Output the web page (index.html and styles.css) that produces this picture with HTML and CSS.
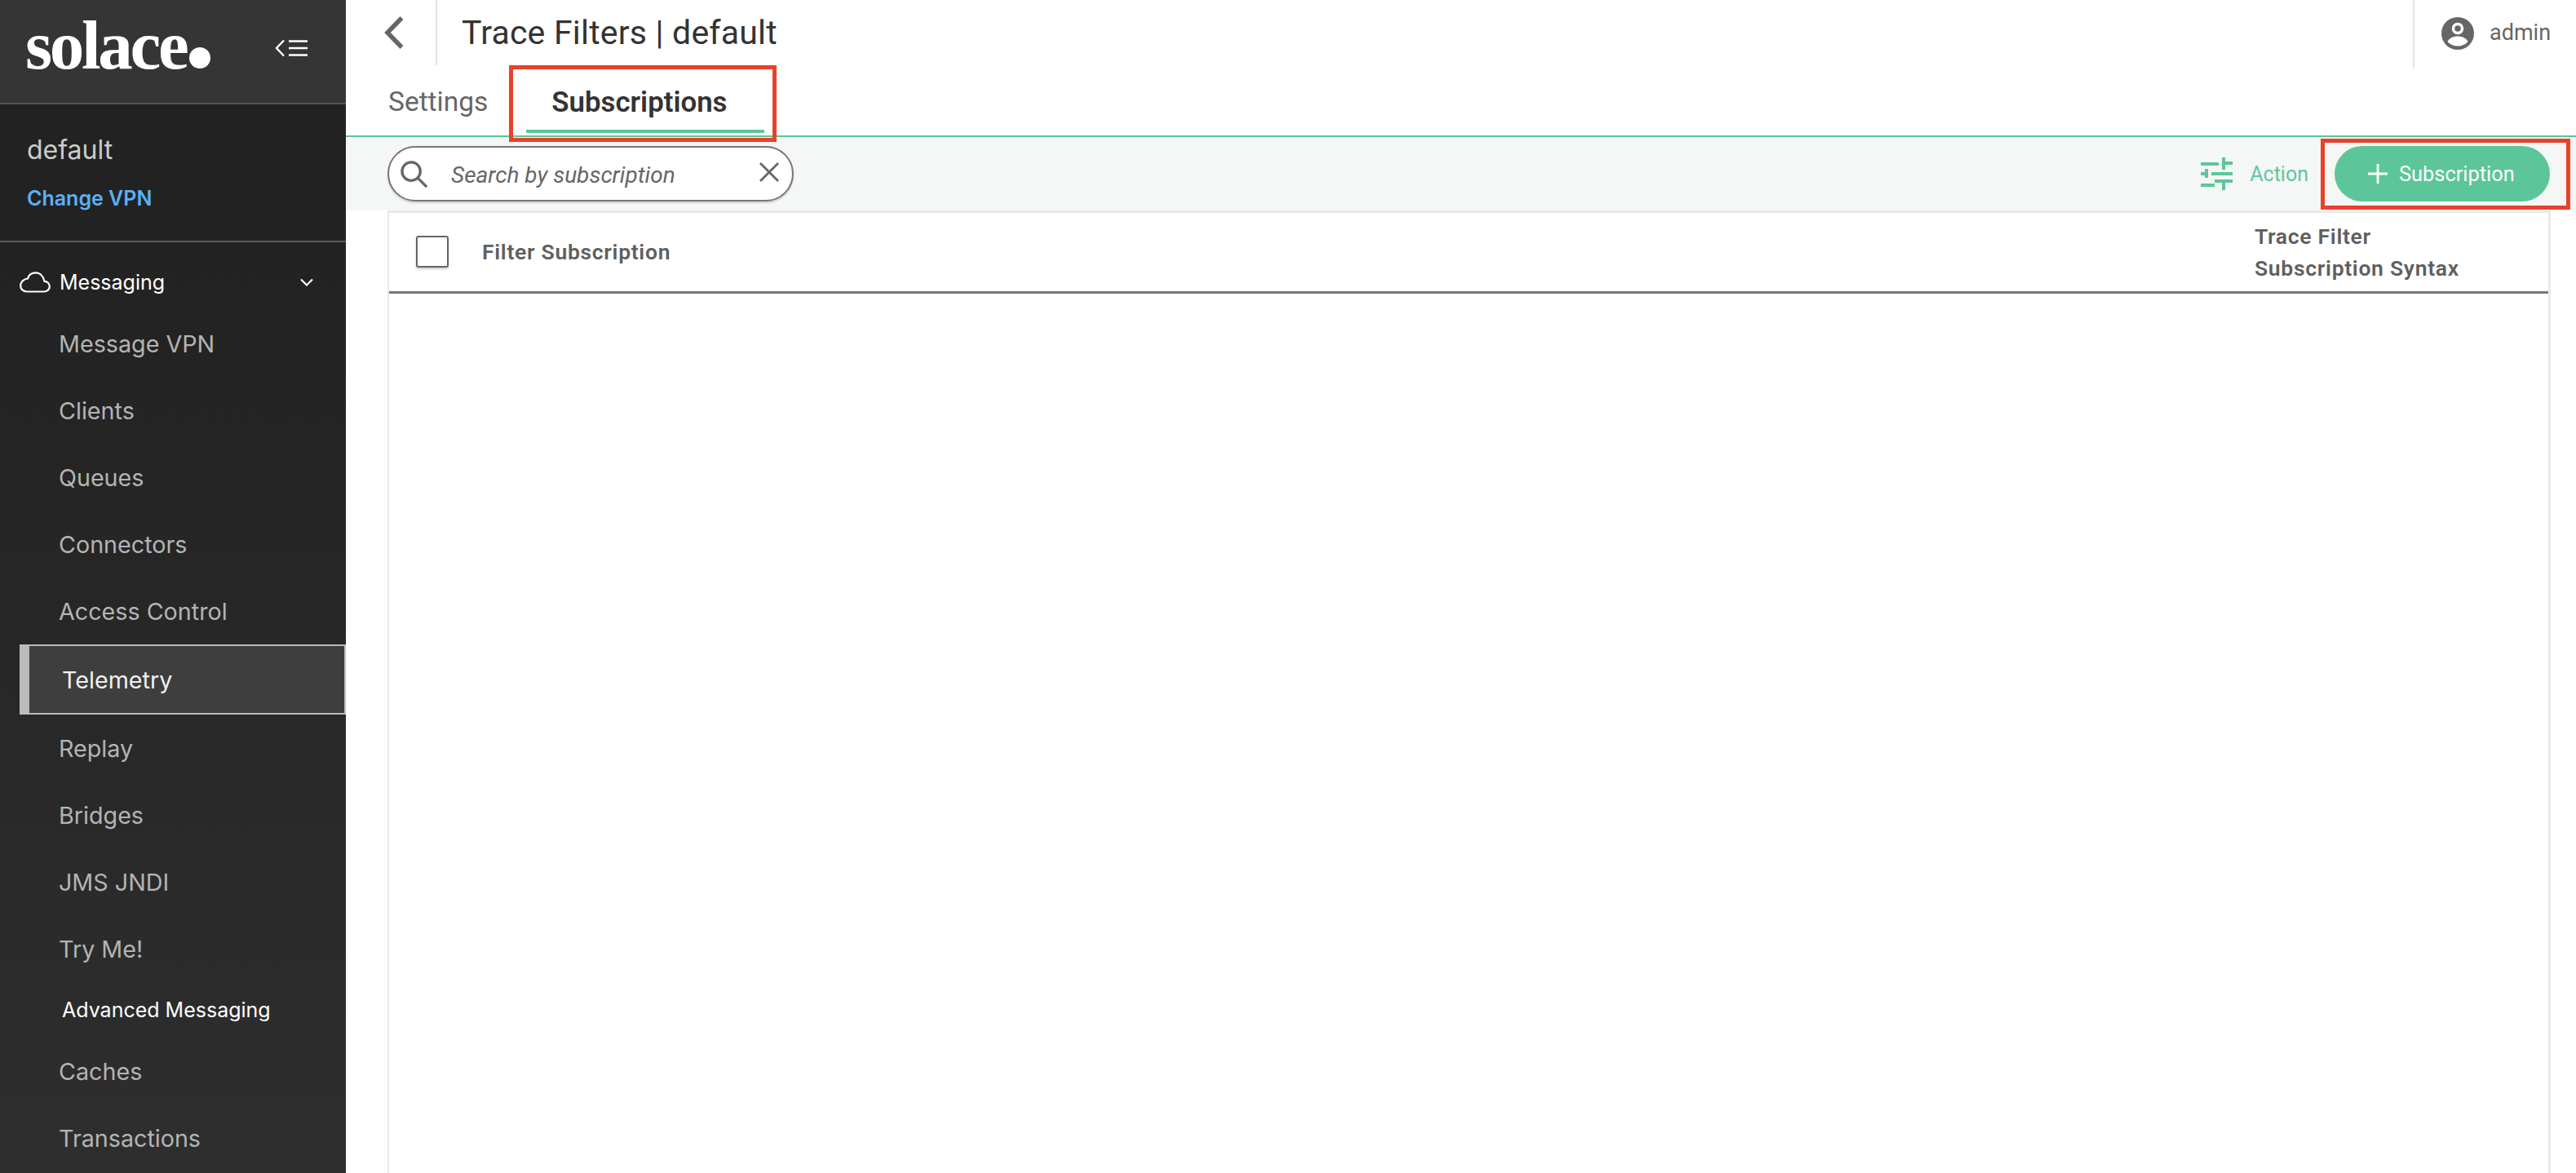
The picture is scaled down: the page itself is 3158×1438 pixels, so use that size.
FILE: index.html
```html
<!DOCTYPE html>
<html lang="en">
<head>
<meta charset="utf-8">
<title>Trace Filters | default</title>
<link rel="stylesheet" href="styles.css">
</head>
<body>
<div class="app">
  <aside class="sidebar">
    <div class="brand">
      <span class="logo">solace<span class="logo-dot"></span></span>
      <svg class="collapse" viewBox="0 0 40 22" fill="none" stroke="#fff" stroke-width="2.4"><path d="M11 1.5 2 11l9 9.500"/><path d="M17 2.500h23M17 11h23M17 19.500h23"/></svg>
    </div>
    <div class="vpn">
      <div class="vpn-name">default</div>
      <a class="vpn-change">Change VPN</a>
    </div>
    <nav class="nav">
      <div class="nav-group">
        <svg class="cloud" viewBox="0 0 38 26" fill="none" stroke="#fff" stroke-width="2.200"><path d="M9 24.500h21c4 0 6.800-2.800 6.800-6.300 0-3.400-2.700-6.200-6.300-6.300C29.200 5.500 25 1.300 19.500 1.300c-4.800 0-8.300 3-9.500 7.200C5 9 1.200 12.700 1.200 17.200c0 4.200 3.300 7.300 7.800 7.300Z"/></svg>
        <span class="nav-group-label">Messaging</span>
        <svg class="caret" viewBox="0 0 16 10" fill="none" stroke="#fff" stroke-width="2.200"><path d="m1 1.500 7 7 7-7"/></svg>
      </div>
      <a class="nav-item">Message VPN</a>
      <a class="nav-item">Clients</a>
      <a class="nav-item">Queues</a>
      <a class="nav-item">Connectors</a>
      <a class="nav-item">Access Control</a>
      <a class="nav-item nav-active">Telemetry</a>
      <a class="nav-item">Replay</a>
      <a class="nav-item">Bridges</a>
      <a class="nav-item">JMS JNDI</a>
      <a class="nav-item">Try Me!</a>
      <div class="nav-section">Advanced Messaging</div>
      <a class="nav-item">Caches</a>
      <a class="nav-item">Transactions</a>
    </nav>
  </aside>
  <main class="main">
    <header class="topbar">
      <div class="back">
        <svg class="back-icon" viewBox="0 0 24 40" fill="none" stroke="#666" stroke-width="5.500"><path d="M21.500 2 4 20l17.500 18"/></svg>
      </div>
      <h1 class="title">Trace Filters | default</h1>
      <div class="user">
        <svg class="avatar" viewBox="0 0 40 40"><circle cx="20" cy="20" r="20" fill="#666"/><circle cx="20" cy="14" r="5.500" fill="none" stroke="#fff" stroke-width="3.500"/><path d="M7.500 30c2-4.500 7.500-6.500 12.500-6.500S30.500 25.500 32.500 30c-3 3.600-7.500 5.500-12.500 5.500S10.500 33.600 7.500 30Z" fill="#fff"/></svg>
        <span class="user-name">admin</span>
      </div>
    </header>
    <div class="tabs">
      <a class="tab">Settings</a>
      <a class="tab tab-active">Subscriptions</a>
    </div>
    <div class="toolbar">
      <div class="search">
        <svg class="search-icon" viewBox="0 0 36 36" fill="none" stroke="#666" stroke-width="3.400"><circle cx="14.500" cy="14.500" r="11.500"/><path d="m23 23 11 11"/></svg>
        <span class="search-text">Search by subscription</span>
        <svg class="search-clear" viewBox="0 0 24 24" fill="none" stroke="#666" stroke-width="2.800"><path d="m1 1 22 22M23 1 1 23"/></svg>
      </div>
      <div class="actions">
        <a class="action">
          <svg class="action-icon" viewBox="0 0 39 40" fill="#5cc69a"><path d="M0 6h22v4H0zM26 0h4v5h9v4h-9v6h-4zM0 18h5v-4h4v11H5v-3H0zM13 18h26v4H13zM0 32h17v4H0zM17 27h22v4h-9v9h-4v-9h-9z"/></svg>
          <span>Action</span>
        </a>
        <button class="add-btn">
          <svg class="plus" viewBox="0 0 24 24" fill="none" stroke="#fff" stroke-width="2.800"><path d="M12 0v24M0 12h24"/></svg>
          <span>Subscription</span>
        </button>
      </div>
    </div>
    <section class="table">
      <div class="table-head">
        <span class="checkbox"></span>
        <span class="col-filter">Filter Subscription</span>
        <span class="col-syntax">Trace Filter<br>Subscription Syntax</span>
      </div>
    </section>
  </main>
</div>
<div class="annot annot-tab"></div>
<div class="annot annot-btn"></div>
</body>
</html>
```
FILE: styles.css
```css
* { box-sizing: border-box; }
html, body { margin: 0; height: 100%; overflow: hidden; }
body { font-family: Roboto, "Open Sans", sans-serif; color: #333; background: #fff; }
a { display: block; text-decoration: none; }

.app { display: flex; height: 1438px; }

/* Sidebar */
.sidebar { width: 424px; flex: none; display: flex; flex-direction: column; background: #222; font-family: Inter, sans-serif; }
.brand { height: 128px; flex: none; display: flex; align-items: flex-start; justify-content: space-between; padding: 0 47px 0 31px; background: #353535; border-bottom: 2px solid #555; }
.logo { display: flex; align-items: baseline; margin-top: 13px; font-family: "Liberation Serif", serif; font-weight: 700; font-size: 85px; line-height: 84px; letter-spacing: -3.300px; color: #fff; }
.logo-dot { width: 26px; height: 26px; margin-left: 4px; border-radius: 50%; background: #fff; }
.collapse { width: 40px; height: 22px; margin-top: 48px; }

.vpn { height: 169px; flex: none; padding: 36px 33px 0; border-bottom: 2px solid #5a5a5a; }
.vpn-name { font-size: 32px; line-height: 40px; color: #ccc; }
.vpn-change { margin-top: 23px; font-size: 25px; line-height: 32px; font-weight: 600; color: #5cb0f2; }

.nav { flex: 1; background: linear-gradient(#222, #2e2e2e); }
.nav-group { height: 83px; display: flex; align-items: flex-start; padding: 33px 40px 0 24px; color: #fff; }
.cloud { width: 38px; height: 26px; margin-top: 3px; }
.nav-group-label { margin-left: 11px; font-size: 25px; line-height: 32px; }
.caret { width: 16px; height: 10px; margin: 11px 0 0 auto; }
.nav-item { height: 82px; padding-left: 72px; font-size: 28.700px; line-height: 84px; color: #b4b4b4; }
.nav-active { height: 86px; margin-left: 24px; padding-left: 40px; line-height: 84px; color: #f0f0f0; background: #3e3e3e; border: 2px solid #bbb; border-left-width: 12px; }
.nav-section { height: 68px; padding-left: 76px; font-size: 25px; line-height: 68px; color: #fff; }

/* Main */
.main { flex: 1; min-width: 0; display: flex; flex-direction: column; }
.topbar { height: 80px; flex: none; display: flex; align-items: flex-start; }
.back { width: 112px; height: 80px; flex: none; display: flex; padding: 20px 0 0 47px; border-right: 2px solid #e3e3e3; }
.back-icon { width: 24px; height: 40px; }
.title { margin: 17px 0 0 30px; font-weight: 400; font-size: 41px; line-height: 46px; letter-spacing: .200px; color: #333; }
.user { margin-left: auto; width: 200px; height: 84px; flex: none; display: flex; align-items: flex-start; padding: 21px 0 0 33px; border-left: 2px solid #e3e3e3; }
.avatar { width: 40px; height: 40px; }
.user-name { margin-left: 19px; font-size: 27px; line-height: 38px; color: #666; }

.tabs { height: 88px; flex: none; display: flex; align-items: flex-start; padding-left: 52px; border-bottom: 2px solid #5cc69a; }
.tab { font-size: 33.500px; line-height: 44px; margin-top: 2px; padding-top: 21px; color: #666; }
.tab-active { width: 292px; height: 81px; margin-left: 47px; padding: 21px 0 0 31px; font-size: 34.800px; font-weight: 600; color: #333; border-bottom: 4px solid #5cc69a; }

.toolbar { height: 90px; flex: none; display: flex; align-items: flex-start; justify-content: space-between; padding: 11px 32px 0 51px; background: #f5f7f6; }
.search { width: 498px; height: 68px; display: flex; align-items: center; padding: 0 16px 0 13px; background: #fff; border: 2px solid #777; border-radius: 34px; box-shadow: 0 2px 2px rgba(0,0,0,.15); }
.search-icon { width: 35px; height: 35px; }
.search-text { margin: 2px 0 0 28px; font-style: italic; font-size: 28px; color: #666; }
.search-clear { width: 24px; height: 24px; margin: -4px 0 0 auto; }
.actions { display: flex; align-items: center; height: 68px; }
.action { display: flex; align-items: center; font-size: 25px; color: #5cc69a; }
.action-icon { width: 39px; height: 40px; margin-right: 21px; }
.add-btn { width: 264px; height: 68px; margin-left: 32px; padding: 0 0 0 41px; display: flex; align-items: center; border: 0; border-radius: 34px; background: #5cc69a; color: #fff; font-family: inherit; font-size: 25.400px; }
.plus { width: 24px; height: 24px; margin-right: 14px; }

.table { flex: 1; margin: 0 31px 0 51px; background: #fff; border: solid #e8eaea; border-width: 3px 3px 0 2px; }
.table-head { height: 99px; display: flex; align-items: center; padding: 0 0 1px 33px; border-bottom: 3px solid #777; font-size: 26.500px; font-weight: 600; line-height: 39px; letter-spacing: .7px; color: #5f5f5f; }
.checkbox { width: 40px; height: 39px; background: #fff; border: 2px solid #666; border-radius: 3px; box-shadow: 0 2px 3px rgba(0,0,0,.2); }
.col-filter { margin-left: 41px; }
.col-syntax { margin-left: auto; width: 360px; }

/* Red review annotations drawn over the screenshot */
.annot { position: absolute; border: 5px solid #e9412a; }
.annot-tab { left: 624px; top: 80px; width: 328px; height: 94px; }
.annot-btn { left: 2845px; top: 170px; width: 306px; height: 87px; }
```
